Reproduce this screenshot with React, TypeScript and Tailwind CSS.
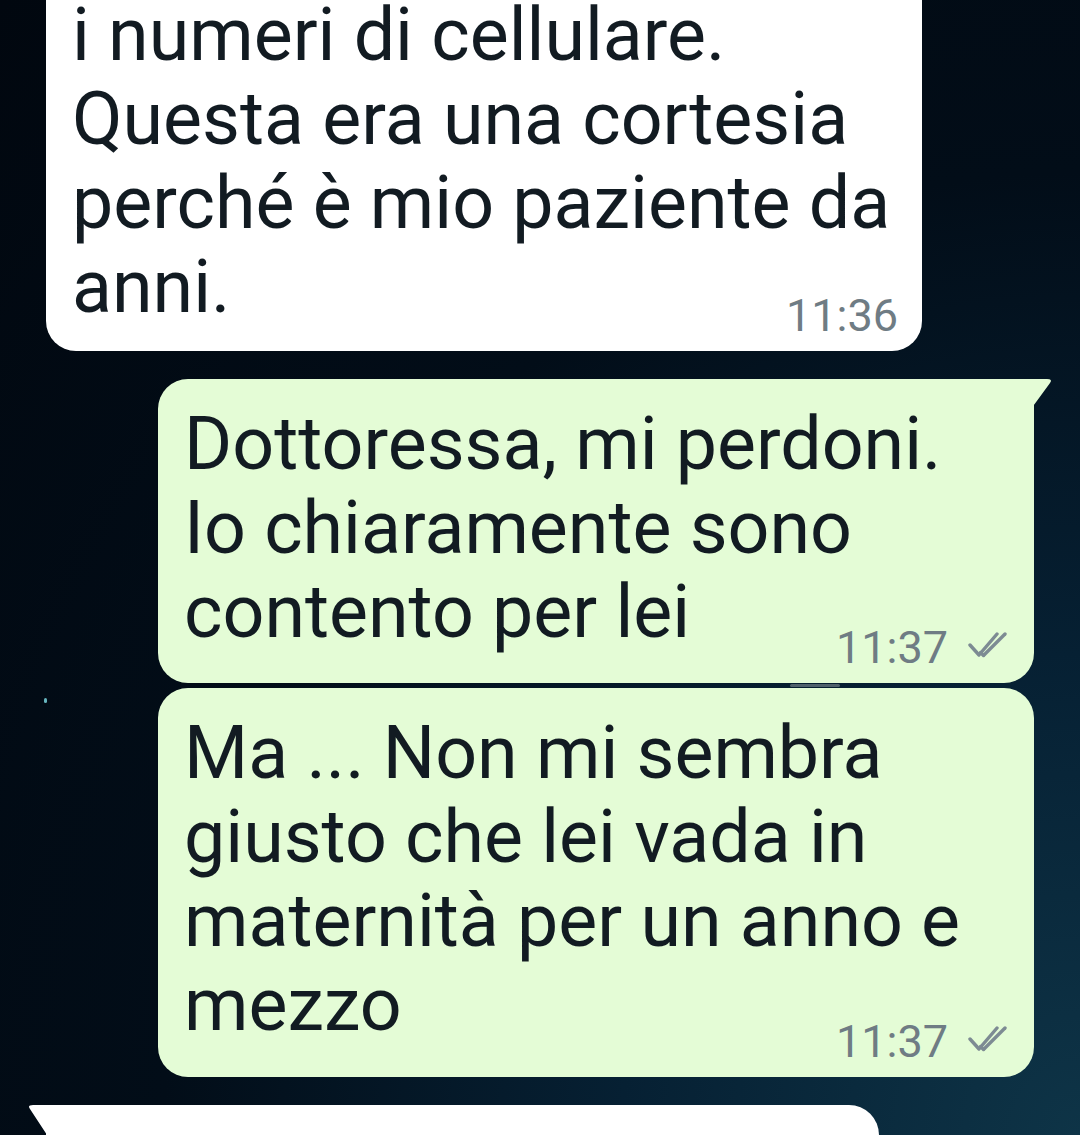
import React from 'react';

interface Message {
  lines: string[];
  time: string;
  outgoing: boolean;
  tail?: boolean;
  timeOffset: string;
}

const messages: Message[] = [
  {
    lines: ['i numeri di cellulare.', 'Questa era una cortesia', 'perché è mio paziente da', 'anni.'],
    time: '11:36',
    outgoing: false,
    timeOffset: '-mt-[39px]',
  },
  {
    lines: ['Dottoressa, mi perdoni.', 'Io chiaramente sono', 'contento per lei'],
    time: '11:37',
    outgoing: true,
    tail: true,
    timeOffset: '-mt-[32px]',
  },
  {
    lines: ['Ma ... Non mi sembra', 'giusto che lei vada in', 'maternità per un anno e', 'mezzo'],
    time: '11:37',
    outgoing: true,
    timeOffset: '-mt-[31px]',
  },
];

function DoubleCheck() {
  return (
    <svg width="42" height="26" viewBox="0 0 42 26" fill="none" className="ml-[20px] mb-[16px]">
      <path d="M2 13 L11 23 L29 2" stroke="#7d8b93" strokeWidth="3.4" strokeLinecap="round" strokeLinejoin="round" />
      <path d="M16 23 L37 2" stroke="#7d8b93" strokeWidth="3.4" strokeLinecap="round" />
      <path d="M12.5 20.5 L15.5 23.5" stroke="#7d8b93" strokeWidth="3.4" strokeLinecap="round" />
    </svg>
  );
}

function Bubble({ msg, className = '' }: { msg: Message; className?: string }) {
  const bg = msg.outgoing ? 'bg-[#e4fcd6]' : 'bg-white';
  return (
    <div className={`relative w-[876px] ${msg.outgoing ? 'self-end' : 'self-start'} ${className}`}>
      {msg.tail && (
        <svg width="22" height="32" viewBox="0 0 22 32" className="absolute top-0 -right-[19px]">
          <path d="M0 0 L16 0 Q22 0 19 4 L0 30 Z" fill="#e4fcd6" />
        </svg>
      )}
      <div
        className={`${bg} rounded-[30px] ${msg.tail ? 'rounded-tr-none' : ''} pl-[26px] pr-[24px] pt-[23px] pb-[9px]`}
      >
        <div className="text-[73.5px] leading-[84px] text-[#121b22] whitespace-nowrap">
          {msg.lines.map((line, i) => (
            <div key={i}>{line}</div>
          ))}
        </div>
        <div className={`flex justify-end items-end ${msg.timeOffset}`}>
          <span className="text-[45px] leading-[52px] text-[#6f7c84]">{msg.time}</span>
          {msg.outgoing && <DoubleCheck />}
        </div>
      </div>
    </div>
  );
}

export default function App() {
  return (
    <div
      className="relative h-[1135px] w-[1080px] overflow-hidden bg-[radial-gradient(ellipse_at_100%_100%,#0e3447_0%,#062033_30%,#020d18_60%,#01070f_100%)] px-[46px]"
      style={{ fontFamily: 'Roboto, "Noto Sans", sans-serif' }}
    >
      <div className="absolute left-[44px] top-[698px] h-[5px] w-[3px] rounded-full bg-[#7fe0e8] opacity-80" />
      <div className="absolute left-[790px] top-[684px] h-[3px] w-[50px] rounded-full bg-[#9aa3a8] opacity-50" />

      <div className="flex flex-col -mt-[30px]">
        <Bubble msg={messages[0]} />
        <Bubble msg={messages[1]} className="mt-[28px]" />
        <Bubble msg={messages[2]} className="mt-[5px]" />

        {/* inizio del messaggio successivo */}
        <div className="relative mt-[28px] w-[833px]">
          <svg width="22" height="34" viewBox="0 0 22 34" className="absolute top-0 -left-[19px]">
            <path d="M22 0 L6 0 Q0 0 3 4 L22 33 Z" fill="#ffffff" />
          </svg>
          <div className="h-[80px] rounded-[30px] rounded-tl-none bg-white" />
        </div>
      </div>
    </div>
  );
}
